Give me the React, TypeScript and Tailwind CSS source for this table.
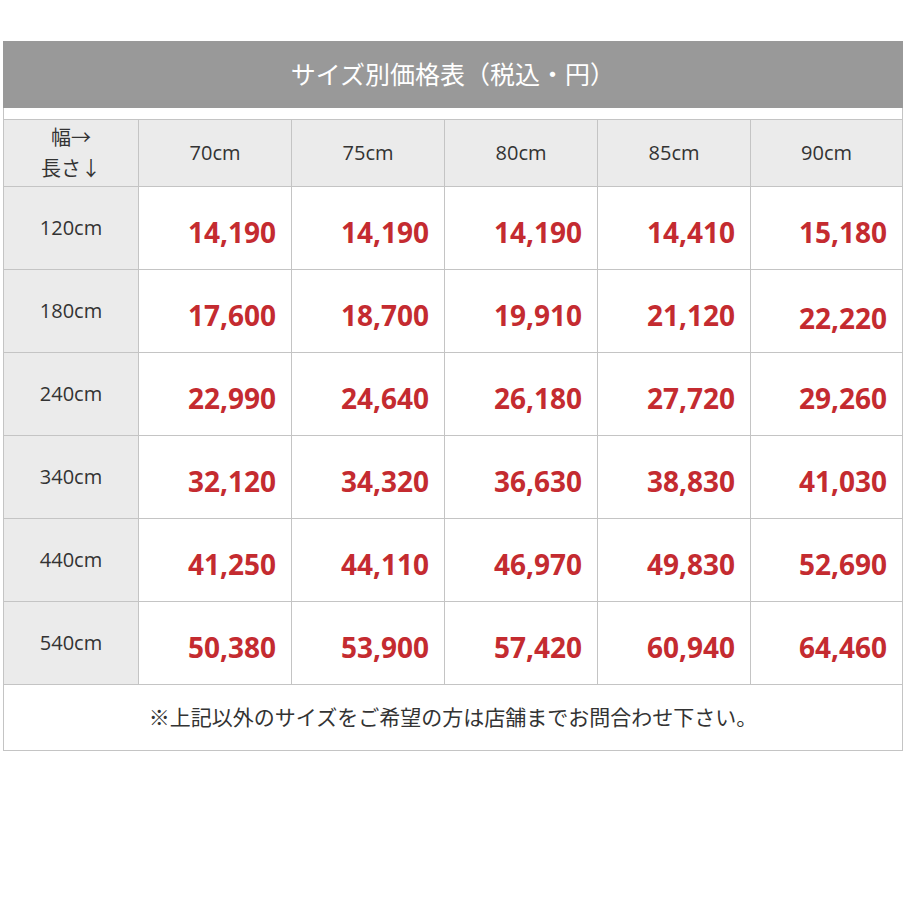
import React from "react";

const widths = ["70cm", "75cm", "80cm", "85cm", "90cm"];

const rows: { len: string; prices: string[] }[] = [
  { len: "120cm", prices: ["14,190", "14,190", "14,190", "14,410", "15,180"] },
  { len: "180cm", prices: ["17,600", "18,700", "19,910", "21,120", "22,220"] },
  { len: "240cm", prices: ["22,990", "24,640", "26,180", "27,720", "29,260"] },
  { len: "340cm", prices: ["32,120", "34,320", "36,630", "38,830", "41,030"] },
  { len: "440cm", prices: ["41,250", "44,110", "46,970", "49,830", "52,690"] },
  { len: "540cm", prices: ["50,380", "53,900", "57,420", "60,940", "64,460"] },
];

const font = { fontFamily: '"Open Sans", "Noto Sans CJK JP", sans-serif' };

const App = () => {
  return (
    <div className="bg-white w-[905px] h-[905px] pt-[41px] pl-[3px] text-[#333]" style={font}>
      <div className="w-[900px] h-[67px] bg-[#999999] flex items-center justify-center text-white text-[25px]">
        サイズ別価格表（税込・円）
      </div>
      <div className="w-[900px] border-x border-b border-[#c4c4c4] pt-[11px]">
        <div className="grid grid-cols-[135px_153px_153px_153px_153px_151px] border-t border-[#c4c4c4]">
          <div className="h-[67px] bg-[#ebebeb] border-r border-b border-[#c4c4c4] flex flex-col items-center justify-center text-[20px] leading-[31px]">
            <span>幅→</span>
            <span>長さ↓</span>
          </div>
          {widths.map((w, i) => (
            <div
              key={w}
              className={`h-[67px] bg-[#ebebeb] border-b border-[#c4c4c4] flex items-center justify-center text-[20px] ${
                i < 4 ? "border-r" : ""
              }`}
            >
              {w}
            </div>
          ))}
          {rows.map((r) => (
            <React.Fragment key={r.len}>
              <div className="h-[83px] bg-[#ebebeb] border-r border-b border-[#c4c4c4] flex items-center justify-center text-[20px]">
                {r.len}
              </div>
              {r.prices.map((p, i) => (
                <div
                  key={i}
                  className={`h-[83px] border-b border-[#c4c4c4] flex items-center justify-end pr-[15px] text-[28px] font-bold text-[#c42b30] ${
                    i < 4 ? "border-r" : ""
                  } ${p === "22,220" ? "pt-[13px]" : "pt-[7px]"}`}
                >
                  {p}
                </div>
              ))}
            </React.Fragment>
          ))}
        </div>
        <div className="h-[65px] flex items-center justify-center text-[21px]">
          ※上記以外のサイズをご希望の方は店舗までお問合わせ下さい。
        </div>
      </div>
    </div>
  );
};

export default App;
